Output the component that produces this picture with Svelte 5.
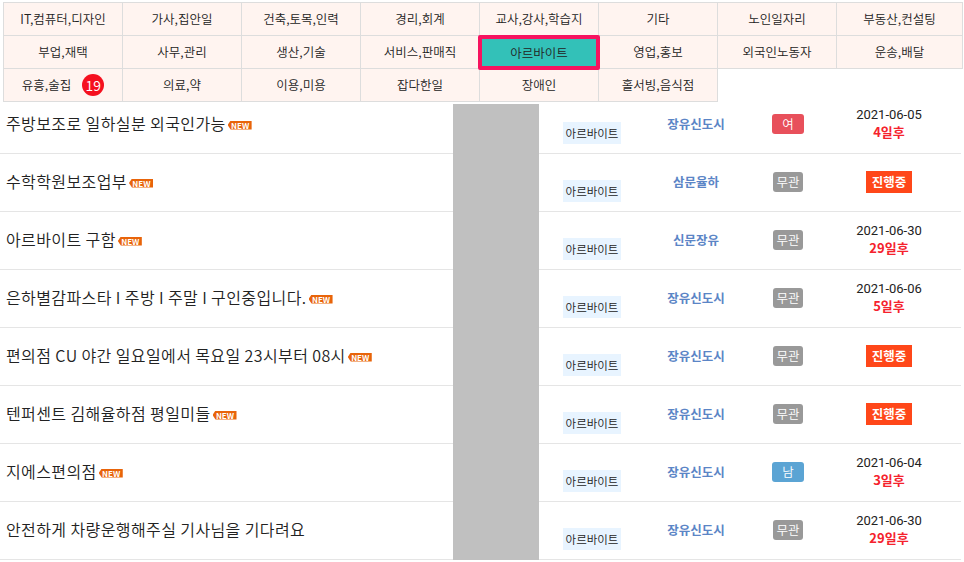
<script>
  const cats = [
    'IT,컴퓨터,디자인', '가사,집안일', '건축,토목,인력', '경리,회계', '교사,강사,학습지', '기타', '노인일자리', '부동산,컨설팅',
    '부업,재택', '사무,관리', '생산,기술', '서비스,판매직', '아르바이트', '영업,홍보', '외국인노동자', '운송,배달',
    '유흥,술집', '의료,약', '이용,미용', '잡다한일', '장애인', '홀서빙,음식점'
  ];

  const jobs = [
    { title: '주방보조로 일하실분 외국인가능', isNew: true, place: '장유신도시', gender: '여', date: '2021-06-05', left: '4일후' },
    { title: '수학학원보조업부', isNew: true, place: '삼문율하', gender: '무관' },
    { title: '아르바이트 구함', isNew: true, place: '신문장유', gender: '무관', date: '2021-06-30', left: '29일후' },
    { title: '은하별감파스타 I 주방 I 주말 I 구인중입니다.', isNew: true, place: '장유신도시', gender: '무관', date: '2021-06-06', left: '5일후' },
    { title: '편의점 CU 야간 일요일에서 목요일 23시부터 08시', isNew: true, place: '장유신도시', gender: '무관' },
    { title: '텐퍼센트 김해율하점 평일미들', isNew: true, place: '장유신도시', gender: '무관' },
    { title: '지에스편의점', isNew: true, place: '장유신도시', gender: '남', date: '2021-06-04', left: '3일후' },
    { title: '안전하게 차량운행해주실 기사님을 기다려요', isNew: false, place: '장유신도시', gender: '무관', date: '2021-06-30', left: '29일후' }
  ];

  const genderClass = { '여': 'female', '남': 'male', '무관': 'any' };
</script>

<div class="page">
  <nav class="cats">
    {#each cats as cat}
      <a class="cat" class:active={cat === '아르바이트'} href="#{cat}">
        {cat}
        {#if cat === '유흥,술집'}<span class="count">19</span>{/if}
      </a>
    {/each}
  </nav>

  <div class="jobs">
    {#each jobs as job}
      <div class="row">
        <div class="title">
          {job.title}
          {#if job.isNew}<span class="new">NEW</span>{/if}
        </div>
        <div class="thumb"></div>
        <div class="type"><span>아르바이트</span></div>
        <div class="place">{job.place}</div>
        <div class="gender"><span class={genderClass[job.gender]}>{job.gender}</span></div>
        <div class="deadline">
          {#if job.date}
            <div class="date">{job.date}</div>
            <div class="left">{job.left}</div>
          {:else}
            <span class="ongoing">진행중</span>
          {/if}
        </div>
      </div>
    {/each}
  </div>
</div>

<style>
  :global(body) {
    margin: 0;
    background: #fff;
  }

  .page {
    width: 964px;
    height: 562px;
    overflow: hidden;
    font-family: "Noto Sans CJK KR", "Noto Sans", sans-serif;
    font-weight: 350;
    color: #222;
  }

  .cats {
    display: grid;
    grid-template-columns: repeat(7, 119px) 126px;
    grid-auto-rows: 33px;
    width: 959px;
    margin: 2px 0 0 3px;
    border-top: 1px solid #ddd;
    border-left: 1px solid #ddd;
  }

  .cat {
    display: flex;
    align-items: center;
    justify-content: center;
    gap: 11px;
    box-sizing: border-box;
    padding-bottom: 2px;
    background: #fff4f0;
    border-right: 1px solid #ddd;
    border-bottom: 1px solid #ddd;
    font-size: 12.5px;
    color: #222;
    text-decoration: none;
  }

  .cat.active {
    z-index: 1;
    margin: -1px -1px -1px -2px;
    padding-bottom: 0;
    background: #33c1b8;
    border: 4px solid #f6135f;
    border-radius: 2px;
  }

  .count {
    width: 22px;
    height: 22px;
    margin-top: 2px;
    border-radius: 50%;
    background: #f5101f;
    color: #fff;
    font-size: 14px;
    line-height: 22px;
    text-align: center;
  }

  .jobs {
    margin-top: 2px;
  }

  .row {
    display: grid;
    grid-template-columns: 453px 86px 106px 102px 82px 120px 12px;
    grid-template-rows: 57px;
    width: 961px;
    align-items: end;
    border-bottom: 1px solid #e5e5e5;
  }

  .row > * {
    height: 57px;
    display: flex;
    align-items: center;
    justify-content: center;
  }

  .row:first-child {
    grid-template-rows: 49px;
  }

  .title {
    justify-content: flex-start;
    gap: 2px;
    padding: 0 0 3px 6px;
    box-sizing: border-box;
    font-size: 16px;
    letter-spacing: 0.4px;
    color: #222;
    white-space: nowrap;
  }

  .new {
    display: inline-block;
    width: 24px;
    height: 9px;
    margin-top: 4px;
    padding-left: 1px;
    box-sizing: border-box;
    background: #e8640a;
    clip-path: polygon(0 50%, 3px 0, 100% 0, 100% 100%, 3px 100%);
    color: #fff;
    font-size: 8px;
    font-weight: 700;
    letter-spacing: 0;
    line-height: 9px;
    text-align: center;
  }

  .row > .thumb {
    align-self: stretch;
    height: auto;
    margin-bottom: -1px;
    background: #c0c0c0;
  }

  .type span {
    display: block;
    margin-top: 16px;
    padding: 0 3px;
    height: 22px;
    line-height: 22px;
    background: #e8f4ff;
    font-size: 11.5px;
  }

  .place {
    padding-bottom: 2px;
    box-sizing: border-box;
    font-size: 12.5px;
    font-weight: 700;
    color: #5b85c6;
  }

  .gender span {
    display: block;
    height: 20px;
    line-height: 20px;
    margin-bottom: 2px;
    padding: 0 3.5px;
    border-radius: 3px;
    color: #fff;
    font-size: 12.5px;
  }

  .gender .female {
    background: #e8505b;
    padding: 0 10px;
  }

  .gender .male {
    background: #5ba4d4;
    padding: 0 10px;
  }

  .gender .any {
    background: #999;
  }

  .row > .deadline {
    flex-direction: column;
    padding-bottom: 3px;
    box-sizing: border-box;
    font-size: 13px;
  }

  .date {
    font-family: Roboto, sans-serif;
    font-weight: 400;
    line-height: 17px;
  }

  .left {
    line-height: 17px;
    font-weight: 700;
    color: #f5222d;
  }

  .ongoing {
    width: 46px;
    height: 22px;
    margin-top: 1px;
    line-height: 22px;
    text-align: center;
    background: #ff4719;
    color: #fff;
    font-size: 12.5px;
    font-weight: 700;
  }
</style>
